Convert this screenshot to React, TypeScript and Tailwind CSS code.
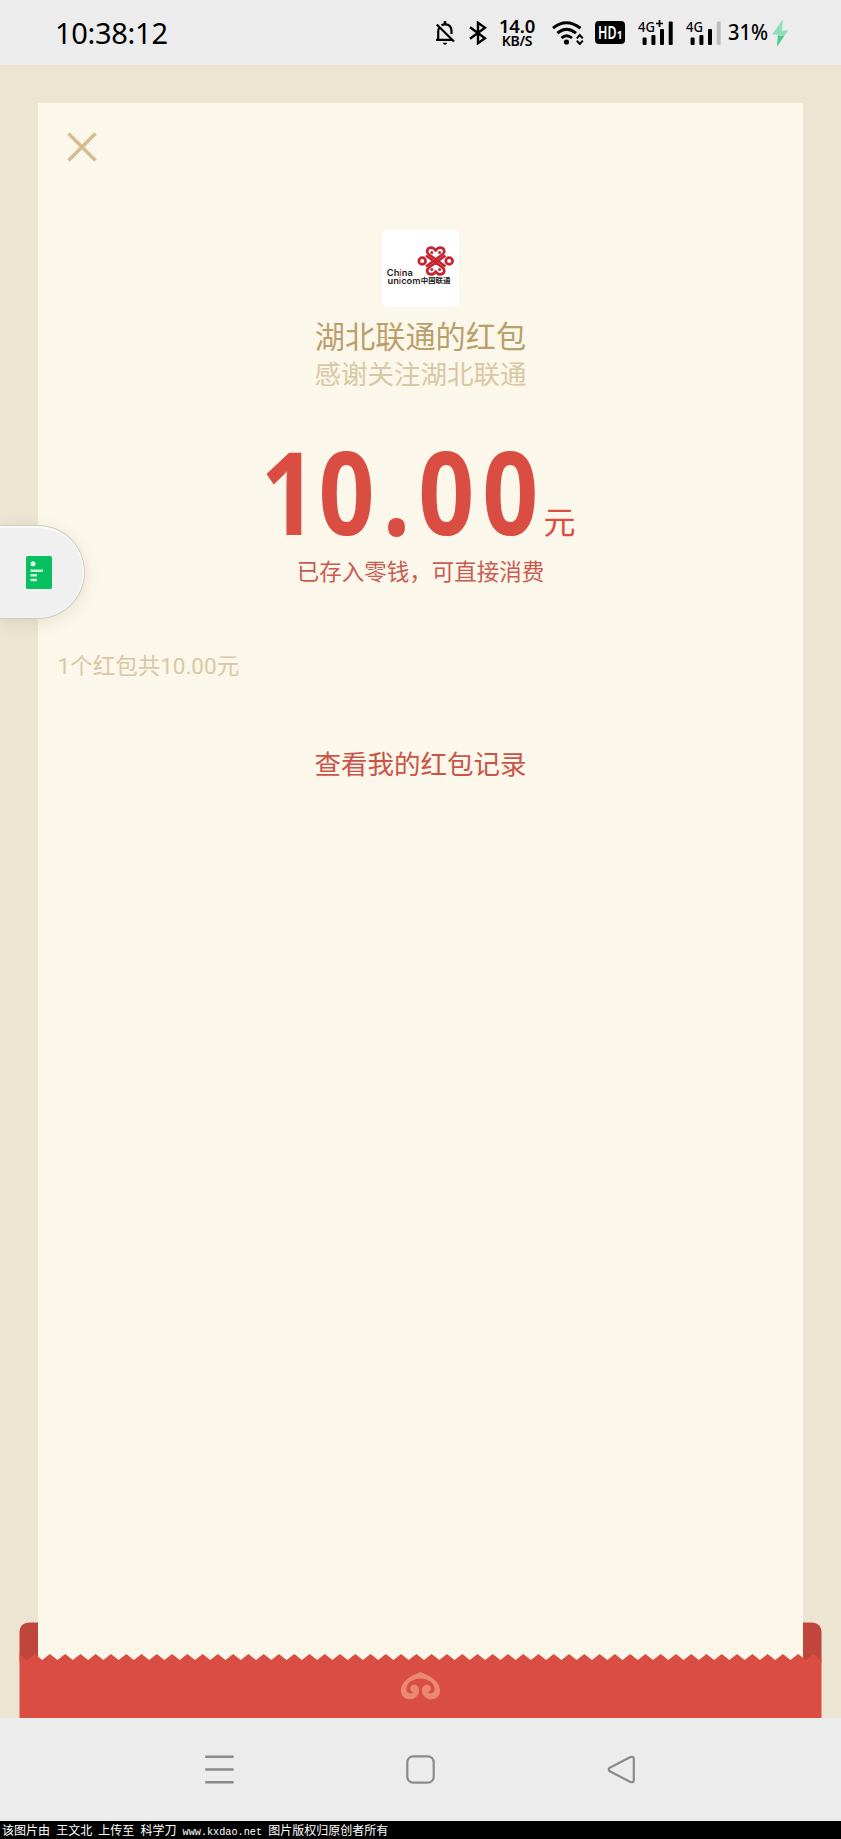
import type { ReactNode } from "react"

const TOOTH = 15.27

// zigzag edge along the top of the envelope front
function zigzag(from: number, to: number, top: number, bottom: number) {
  const points: string[] = []
  let x = from
  let low = true
  while (x < to + TOOTH) {
    points.push(`${x.toFixed(2)},${low ? bottom : top}`)
    low = !low
    x += TOOTH / 2
  }
  return points.join(" ")
}

function Signal({ label, plus, weak }: { label: string; plus?: boolean; weak?: boolean }) {
  return (
    <svg width="36" height="36" viewBox="0 -5 36 36" className="shrink-0">
      <text x="0" y="12.3" fontSize="14" fontWeight="500" textLength="17" lengthAdjust="spacingAndGlyphs">
        {label}
      </text>
      {plus && <path d="M18 3.5h7M21.5 0v7" stroke="#000" strokeWidth="1.7" />}
      <rect x="4.6" y="17.5" width="4" height="7.5" rx="1" />
      <rect x="13.4" y="15" width="4" height="10" rx="1" />
      <rect x="22" y="9" width="4" height="16" rx="1" />
      <rect x="30.7" y="1.5" width="4" height="23.5" rx="1" fill={weak ? "#bdbdbd" : "#000"} />
    </svg>
  )
}

function StatusBar() {
  return (
    <header className="flex h-[65px] items-center bg-[#ececec] pl-[55px] text-black">
      <span className="w-[380px] shrink-0 font-['Noto_Sans',sans-serif] text-[29px] leading-none tracking-[-0.3px]">
        10:38:12
      </span>
      <svg width="20" height="24" viewBox="0 0 20 24" className="shrink-0" fill="none" stroke="#000" strokeWidth="2.2">
        <path d="M1 18.8h15.5M3.2 18.5V10.5q0-2 1-3.5M6.5 4.2Q8 3.3 10 3.3q6.5 0 6.5 7V13M1.8 3.5 19 20.5" />
        <path d="M10 0v3.5" strokeWidth="2.6" />
        <path d="M7.8 21.8h4.4q-.6 2-2.2 2t-2.2-2z" fill="#000" stroke="none" />
      </svg>
      <svg width="18" height="24" viewBox="0 0 18 24" className="ml-[14px] shrink-0" fill="none" stroke="#000" strokeWidth="2.4">
        <path d="M1 6.2 16 17.2 9 22.2V1.8l7 5L1 17.8" />
      </svg>
      <div className="ml-[12px] flex w-[36px] shrink-0 flex-col items-center font-['Noto_Sans',sans-serif] font-semibold">
        <span className="text-[18.5px] leading-[15px] tracking-[-0.2px]">14.0</span>
        <span className="text-[14px] leading-[15px] tracking-[-0.3px]">KB/S</span>
      </div>
      <svg width="32" height="24" viewBox="0 0 32 24" className="ml-[17px] shrink-0" fill="none" stroke="#000">
        <path d="M1 7.2Q14 -3.8 28.5 7.2" strokeWidth="3" />
        <path d="M5.4 12.2Q14.5 4.2 24 12.2" strokeWidth="3" />
        <path d="M9.5 17Q14.5 12.4 20 17" strokeWidth="2.8" />
        <circle cx="14.5" cy="21" r="2.6" fill="#000" stroke="none" />
        <path d="m24.8 17.4 3-3.4 3 3.4M24.8 19.6l3 3.4 3-3.4" strokeWidth="2" />
      </svg>
      <div className="ml-[11px] flex h-[23px] w-[30px] shrink-0 items-center justify-center rounded bg-black font-['Noto_Sans',sans-serif] text-white">
        <svg width="19" height="29" viewBox="0 0 19 29" className="shrink-0" fill="currentColor">
          <text x="0" y="20.6" fontSize="17" fontWeight="600" textLength="18.5" lengthAdjust="spacingAndGlyphs">
            HD
          </text>
        </svg>
        <span className="pt-[4px] text-[10px] leading-none font-bold">1</span>
      </div>
      <div className="ml-[13px] flex shrink-0 gap-[12px] font-['Noto_Sans',sans-serif]">
        <Signal label="4G" plus />
        <Signal label="4G" weak />
      </div>
      <svg width="42" height="40" viewBox="0 0 42 40" className="ml-[6px] shrink-0 font-['Noto_Sans',sans-serif]">
        <text x="0" y="27.3" fontSize="22" fontWeight="500" textLength="40" lengthAdjust="spacingAndGlyphs">
          31%
        </text>
      </svg>
      <svg width="16" height="28" viewBox="0 0 16 28" className="ml-[2px] shrink-0">
        <path d="M10.8.5 0 15.5h6L5 27.5 16 11.5h-6z" fill="#8be0b8" />
        <path d="M5.9 17h6.3L5 27.5z" fill="#4fc98f" />
      </svg>
    </header>
  )
}

function UnicomLogo() {
  return (
    <svg width="77" height="77" viewBox="0 0 77 77" className="mt-[126.5px] shrink-0">
      <rect width="77" height="77" rx="5" fill="#fff" />
      <g fill="none" stroke="#c6242f" strokeWidth="2.7" strokeLinejoin="round">
        <path d="M44 36.5 60.5 24.5c3.4-3 1.4-6.9-2.3-6.9-2.3 0-3.6 1.6-4.5 3-.9-1.4-2.2-3-4.5-3-3.7 0-5.7 3.9-2.3 6.9L63.5 36.5" />
        <path d="M44 25.5 60.5 37.5c3.4 3 1.4 6.9-2.3 6.9-2.3 0-3.6-1.6-4.5-3-.9 1.4-2.2 3-4.5 3-3.7 0-5.7-3.9-2.3-6.9L63.5 25.5" />
        <circle cx="40.2" cy="31" r="3.4" />
        <circle cx="67.2" cy="31" r="3.4" />
      </g>
      <g fill="#c6242f">
        <circle cx="49.8" cy="22.5" r="1.5" />
        <circle cx="57.6" cy="22.5" r="1.5" />
        <circle cx="49.8" cy="39.5" r="1.5" />
        <circle cx="57.6" cy="39.5" r="1.5" />
      </g>
      <g fill="#222" fontFamily="Inter, sans-serif" fontWeight="600">
        <text x="4.8" y="45.8" fontSize="9" textLength="26" lengthAdjust="spacingAndGlyphs">
          Ch<tspan fill="#d7303a">i</tspan>na
        </text>
        <text x="5.5" y="53.6" fontSize="8.4" textLength="33" lengthAdjust="spacingAndGlyphs">
          un<tspan fill="#d7303a">i</tspan>com
        </text>
      </g>
      <text x="38.8" y="53.3" fontSize="7.4" fontWeight="700" fill="#222" fontFamily="'Noto Sans CJK SC', sans-serif">
        中国联通
      </text>
    </svg>
  )
}

function FloatingTab() {
  return (
    <div className="absolute top-[525px] left-0 flex h-[94px] w-[85px] items-center rounded-r-full border border-l-0 border-[#cfccc2] bg-[#f0f0f0] pl-[26px] shadow-[0_4px_16px_rgba(120,100,50,0.14),inset_-1px_0_1px_#fff,inset_0_2px_1px_#fafafa]">
      <svg width="26" height="33" viewBox="0 0 26 33">
        <rect width="26" height="33" rx="1.5" fill="#07c160" />
        <circle cx="7" cy="7.7" r="2.5" fill="#e3f9ec" />
        <path d="M4.5 14.7H17M4.5 19.3H11M4.5 24H11" stroke="#c9f3da" strokeWidth="2.5" />
      </svg>
    </div>
  )
}

function Envelope() {
  return (
    <svg width="803" height="96" viewBox="0 0 803 96" className="absolute bottom-0 left-[19px]">
      <defs>
        <clipPath id="body">
          <path d="M.5 96V11Q.5.5 11 .5h781Q802.5.5 802.5 11v85z" />
        </clipPath>
      </defs>
      <g clipPath="url(#body)">
        <path d="M0 0h19v40H0zM784 0h19v40h-19z" fill="#c0463d" />
        <polygon points={`0,32 ${zigzag(8, 803, 32, 38)} 820,96 0,96`} fill="#d94d42" />
      </g>
      <path
        transform="translate(382 50)"
        d="M19.5 0C14 2.5 0 7.5 0 18.5c0 6 4 8.7 8.7 8.7 5.3 0 9.3-3.7 9.3-8.8 0-3.3-2-5.6-4.7-5.6-2.4 0-4.1 1.7-4.1 3.8 0 2.3 1.7 3.3 3 3.7-.8 1.6-6.8 1.7-6.8-3.4C5.4 10.5 12.5 6.4 19.5 6.4s14.1 4.1 14.1 10.5c0 5.1-6 5-6.8 3.4 1.3-.4 3-1.4 3-3.7 0-2.1-1.7-3.8-4.1-3.8-2.7 0-4.7 2.3-4.7 5.6 0 5.1 4 8.8 9.3 8.8 4.7 0 8.7-2.7 8.7-8.7C39 7.5 25 2.5 19.5 0z"
        fill="#e98970"
      />
    </svg>
  )
}

function NavBar() {
  return (
    <nav className="flex h-[103px] items-center justify-center gap-[172px] bg-[#ececec] text-[#8a8a8a]">
      <svg width="29" height="29" viewBox="0 0 29 29" fill="none" stroke="currentColor" strokeWidth="2.4">
        <path d="M.2 1.7h28.4M.2 14.5h28.4M.2 27.3h28.4" />
      </svg>
      <svg width="29" height="29" viewBox="0 0 29 29" fill="none" stroke="currentColor" strokeWidth="2.2">
        <rect x="1.3" y="1.3" width="26.4" height="26.4" rx="6" />
      </svg>
      <svg width="29" height="29" viewBox="0 0 29 29" fill="none" stroke="currentColor" strokeWidth="2.2" strokeLinejoin="round">
        <path d="M2.8 12.7 23.5 2q3.3-1 3.3 2v21q0 3-3.3 2L2.8 16.3q-2.2-1.8 0-3.6z" />
      </svg>
    </nav>
  )
}

function Latin({ children }: { children: ReactNode }) {
  return <span className="font-['Liberation_Mono',monospace] text-[10.2px] whitespace-pre">{children}</span>
}

function Watermark() {
  return (
    <footer className="h-[18px] bg-black pl-[2px] font-['Noto_Sans_CJK_SC',sans-serif] text-[12px] leading-[17px] whitespace-nowrap text-white">
      该图片由<Latin> </Latin>王文北<Latin> </Latin>上传至<Latin> </Latin>科学刀<Latin> www.kxdao.net </Latin>
      图片版权归原创者所有
    </footer>
  )
}

export default function App() {
  return (
    <div className="relative flex h-[1839px] w-[841px] flex-col overflow-hidden font-['Roboto','Noto_Sans_CJK_SC',sans-serif]">
      <StatusBar />
      <main className="relative h-[1653px] bg-[#ece5d2] px-[38px] pt-[38px]">
        <section className="relative flex h-[1557px] flex-col items-center bg-[#fbf7ea]">
          <svg width="30" height="30" viewBox="0 0 30 30" className="absolute top-[29px] left-[29px]" stroke="#d5bd90" strokeWidth="3.5">
            <path d="m1.5 1.5 27 27M28.5 1.5l-27 27" />
          </svg>
          <UnicomLogo />
          <h1 className="mt-[11.5px] text-[30.2px] leading-[40px] font-normal text-[#bb9f6b]">湖北联通的红包</h1>
          <p className="text-[26.5px] leading-[34px] text-[#d9c8a5]">感谢关注湖北联通</p>
          <div className="mt-[44px] flex h-[110px] items-baseline pr-[6px] text-[#d94d42]">
            <span className="w-[284px] origin-left scale-x-[0.86] pl-[2px] font-['Open_Sans',sans-serif] text-[114px] leading-[110px] font-[660] tracking-[9.2px]">
              <span className="tracking-[2px]">1</span>0.00
            </span>
            <span className="-translate-y-px text-[32px] leading-[40px]">元</span>
          </div>
          <p className="mt-[11px] text-[22.5px] leading-[30px] text-[#cb5b50]">已存入零钱，可直接消费</p>
          <p className="mt-[64px] self-start pl-[19.5px] text-[22.5px] leading-[30px] text-[#d9c8a5]">
            1个红包共10.00元
          </p>
          <a className="mt-[67px] text-[26.5px] leading-[34px] text-[#cb5449]">查看我的红包记录</a>
        </section>
        <Envelope />
      </main>
      <NavBar />
      <Watermark />
      <FloatingTab />
    </div>
  )
}
